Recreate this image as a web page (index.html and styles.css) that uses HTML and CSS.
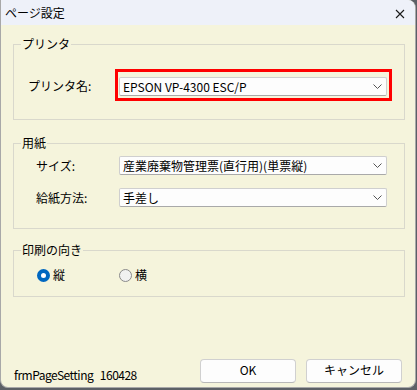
FILE: index.html
```html
<!DOCTYPE html>
<html lang="ja">
<head>
<meta charset="utf-8">
<link rel="stylesheet" href="styles.css">
</head>
<body>
<div class="window">
  <div class="titlebar">
    <span class="title">ページ設定</span>
    <svg class="close" width="10" height="10" viewBox="0 0 10 10"><path d="M1 1 L9 9 M9 1 L1 9" stroke="#1a1a1a" stroke-width="1.1" fill="none"/></svg>
  </div>
  <div class="content">
    <div class="group g1">
      <div class="legend">プリンタ</div>
      <div class="row">
        <span class="label l1">プリンタ名:</span>
        <div class="highlight">
          <div class="combo"><span>EPSON VP-4300 ESC/P</span><svg class="chev" width="9" height="5" viewBox="0 0 9 5"><path d="M0.5 0.5 L4.5 4.5 L8.5 0.5" stroke="#555" stroke-width="1" fill="none"/></svg></div>
        </div>
      </div>
    </div>
    <div class="group g2">
      <div class="legend">用紙</div>
      <div class="row">
        <span class="label">サイズ:</span>
        <div class="combo"><span>産業廃棄物管理票(直行用)(単票縦)</span><svg class="chev" width="9" height="5" viewBox="0 0 9 5"><path d="M0.5 0.5 L4.5 4.5 L8.5 0.5" stroke="#555" stroke-width="1" fill="none"/></svg></div>
      </div>
      <div class="row r2">
        <span class="label">給紙方法:</span>
        <div class="combo"><span>手差し</span><svg class="chev" width="9" height="5" viewBox="0 0 9 5"><path d="M0.5 0.5 L4.5 4.5 L8.5 0.5" stroke="#555" stroke-width="1" fill="none"/></svg></div>
      </div>
    </div>
    <div class="group g3">
      <div class="legend">印刷の向き</div>
      <div class="radios">
        <label class="radio"><span class="dot on"></span>縦</label>
        <label class="radio"><span class="dot"></span>横</label>
      </div>
    </div>
    <div class="footer">
      <span class="formname">frmPageSetting&nbsp;&nbsp;&nbsp;160428</span>
      <div class="buttons">
        <button class="btn">OK</button>
        <button class="btn">キャンセル</button>
      </div>
    </div>
  </div>
</div>
</body>
</html>
```
FILE: styles.css
```css
html, body {
  margin: 0;
  padding: 0;
}
body {
  width: 417px;
  height: 390px;
  background: #5c6066;
  font-family: "Noto Sans CJK JP", "Liberation Sans", sans-serif;
  font-size: 12px;
  color: #000;
  overflow: hidden;
}
.window {
  width: 414px;
  height: 387px;
  background: #f5f4dc;
  border: 1px solid #a8a8a8;
  border-top: none;
  border-radius: 0 8px 8px 8px;
  display: flex;
  flex-direction: column;
  overflow: hidden;
}
.titlebar {
  height: 25px;
  background: #eef1f9;
  display: flex;
  align-items: center;
  justify-content: space-between;
  padding: 0 10px 0 4px;
  flex-shrink: 0;
}
.title {
  font-size: 12px;
  line-height: 14px;
}
.close {
  margin-top: 2px;
}
.content {
  flex: 1;
  display: flex;
  flex-direction: column;
  padding: 19px 0 0 12px;
}
.group {
  box-sizing: border-box;
  width: 392px;
  border: 1px solid #d9d8cc;
  flex-shrink: 0;
}
.legend {
  width: fit-content;
  margin: -8px 0 0 7px;
  padding: 0 1px;
  background: #f5f4dc;
  line-height: 14px;
  font-size: 12px;
}
.row {
  display: flex;
  align-items: center;
}
.label {
  width: 83px;
  padding-left: 22px;
  flex-shrink: 0;
}
.l1 {
  width: 87px;
  padding-left: 14px;
}
.g1 {
  height: 76px;
}
.g1 .row {
  margin-top: 18px;
}
.highlight {
  border: 3px solid #ff0000;
  padding: 5px 2px 2px 1px;
  width: 268px;
}
.combo {
  box-sizing: border-box;
  height: 19px;
  width: 268px;
  background: #fdfdfd;
  border: 1px solid #cfcfcf;
  border-bottom-color: #a9a9a9;
  border-radius: 2px;
  display: flex;
  align-items: center;
  justify-content: space-between;
  padding: 0 4px 0 3px;
  line-height: 14px;
}
.g2 {
  margin-top: 23px;
  height: 86px;
}
.g2 .row {
  margin-top: 6px;
}
.g2 .r2 {
  margin-top: 13px;
}
.g3 {
  margin-top: 21px;
  height: 47px;
}
.radios {
  display: flex;
  margin-top: 11px;
  padding-left: 23px;
}
.radio {
  display: flex;
  align-items: center;
  gap: 3px;
  width: 82px;
  line-height: 14px;
}
.dot {
  box-sizing: border-box;
  width: 13px;
  height: 13px;
  border-radius: 50%;
  border: 1px solid #8a8a8a;
  background: #f1f1f1;
}
.dot.on {
  border: 4px solid #0067c0;
  background: #ffffff;
}
.footer {
  margin-top: auto;
  display: flex;
  align-items: center;
  justify-content: space-between;
  padding: 0 13px 4px 1px;
}
.formname {
  margin-top: 8px;
  line-height: 14px;
  letter-spacing: -0.5px;
}
.buttons {
  display: flex;
  gap: 10px;
}
.btn {
  box-sizing: border-box;
  width: 96px;
  height: 24px;
  background: #fdfdfd;
  border: 1px solid #d0d0d0;
  border-bottom-color: #b8b8b8;
  border-radius: 4px;
  font-family: inherit;
  font-size: 12px;
  color: #000;
  padding: 0 0 3px 0;
}
```
